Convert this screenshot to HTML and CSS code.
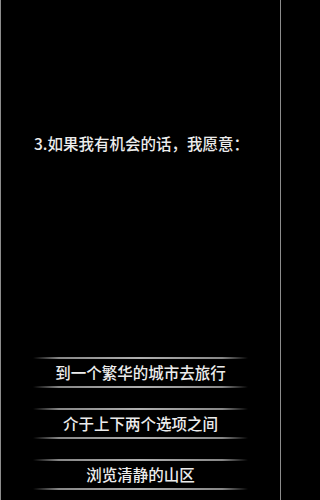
FILE: index.html
```html
<!DOCTYPE html>
<html lang="zh">
<head>
<meta charset="utf-8">
<link rel="stylesheet" href="styles.css">
</head>
<body>
<div class="screen">
  <p class="question">3.如果我有机会的话，我愿意：</p>
  <div class="options">
    <div class="option"><span class="label">到一个繁华的城市去旅行</span></div>
    <div class="option"><span class="label">介于上下两个选项之间</span></div>
    <div class="option"><span class="label">浏览清静的山区</span></div>
  </div>
</div>
</body>
</html>
```
FILE: styles.css
```css
html, body {
  margin: 0;
  padding: 0;
  background: #000;
}
.screen {
  box-sizing: border-box;
  width: 281px;
  height: 500px;
  border-left: 1px solid #8c8c8c;
  border-right: 1px solid #8c8c8c;
  display: flex;
  flex-direction: column;
  font-family: "Noto Sans CJK SC", "Noto Sans", sans-serif;
  font-weight: 500;
  color: #ececec;
}
.question {
  margin: 133px 0 0;
  padding-left: 2px;
  font-size: 15.5px;
  line-height: 20px;
  text-align: center;
}
.options {
  margin-top: auto;
  padding-bottom: 10px;
  display: flex;
  flex-direction: column;
  gap: 20px;
}
.option {
  margin: 0 32px;
  display: flex;
  flex-direction: column;
}
.option::before,
.option::after {
  content: "";
  display: block;
  height: 2px;
  background: linear-gradient(to right, rgba(150,150,150,0) 0%, rgba(150,150,150,0.9) 12%, #b0b0b0 50%, rgba(150,150,150,0.9) 88%, rgba(150,150,150,0) 100%);
}
.label {
  display: block;
  height: 27px;
  line-height: 27px;
  font-size: 15.5px;
  text-align: center;
}
```
